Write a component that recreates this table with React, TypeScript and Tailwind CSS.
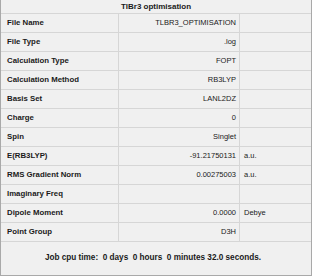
import React from 'react';

const rows = [
  { label: 'File Name', value: 'TLBR3_OPTIMISATION', unit: '' },
  { label: 'File Type', value: '.log', unit: '' },
  { label: 'Calculation Type', value: 'FOPT', unit: '' },
  { label: 'Calculation Method', value: 'RB3LYP', unit: '' },
  { label: 'Basis Set', value: 'LANL2DZ', unit: '' },
  { label: 'Charge', value: '0', unit: '' },
  { label: 'Spin', value: 'Singlet', unit: '' },
  { label: 'E(RB3LYP)', value: '-91.21750131', unit: 'a.u.' },
  { label: 'RMS Gradient Norm', value: '0.00275003', unit: 'a.u.' },
  { label: 'Imaginary Freq', value: '', unit: '' },
  { label: 'Dipole Moment', value: '0.0000', unit: 'Debye' },
  { label: 'Point Group', value: 'D3H', unit: '' },
];

const App = () => {
  return (
    <div className="w-[314px] h-[279px] bg-white font-['Liberation_Sans',Arial,sans-serif] text-[#1a1a1a]">
      <div className="w-[312px] h-[276px] bg-[#f0f0f0] border-l border-r border-b border-[#a9a9a9] flex flex-col">
        {/* Title */}
        <div className="h-[14px] border-b border-[#d6d6d6] flex items-center justify-center text-[8px] font-bold">
          TlBr3 optimisation
        </div>

        {/* Property rows */}
        {rows.map((row) => (
          <div
            key={row.label}
            className="h-[19px] grid grid-cols-[118px_121px_1fr] border-b border-[#d6d6d6] text-[7.5px]"
          >
            <div className="flex items-center pl-[6px] text-[7.8px] font-bold border-r border-[#d6d6d6]">
              {row.label}
            </div>
            <div className="flex items-center justify-end pr-[3px] border-r border-[#d6d6d6]">
              {row.value}
            </div>
            <div className="flex items-center pl-[4px]">{row.unit}</div>
          </div>
        ))}

        {/* Footer */}
        <div className="flex-1 flex items-center justify-center pr-[6px] text-[8.2px] font-bold whitespace-pre">
          {'Job cpu time:  0 days  0 hours  0 minutes 32.0 seconds.'}
        </div>
      </div>
    </div>
  );
};

export default App;
